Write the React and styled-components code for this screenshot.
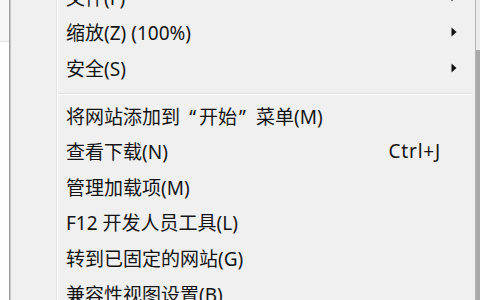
import React from "react";
import styled, { createGlobalStyle } from "styled-components";

const GlobalStyle = createGlobalStyle`
  html, body {
    margin: 0;
    padding: 0;
    background: #ffffff;
  }
  body {
    font-family: "Noto Sans", "Noto Sans CJK SC", sans-serif;
  }
`;

const Screen = styled.div`
  display: flex;
  width: 480px;
  height: 300px;
  overflow: hidden;
`;

// strip of the window behind the menu, on the left
const Backdrop = styled.div`
  width: 9px;
  flex: none;
  background: linear-gradient(
    to bottom,
    #f5f5f5 0,
    #f5f5f5 41px,
    #e4e4e4 41px,
    #e4e4e4 42px,
    #ffffff 42px
  );
`;

const Menu = styled.div`
  flex: 1;
  display: flex;
  background: #f0f0f0;
  border-left: 1px solid #a0a0a0;
  box-shadow: inset 1px 0 0 #c4c4c4;
`;

const Gutter = styled.div`
  width: 46px;
  flex: none;
  border-right: 1px solid #e2e3e3;
  box-shadow: 1px 0 0 #ffffff;
`;

const Items = styled.div`
  flex: 1;
  display: flex;
  flex-direction: column;
  margin-top: -21px;
  padding-left: 1px;
`;

const Item = styled.div`
  display: flex;
  align-items: center;
  height: 35.6px;
  flex: none;
  padding-left: 8px;
  font-size: 19px;
  color: #141414;
  white-space: nowrap;
`;

const Label = styled.span`
  flex: 1;
`;

// full-width CJK quotation mark
const Quote = styled.span`
  display: inline-block;
  width: 1em;
  text-align: ${(p) => (p.$open ? "right" : "left")};
  padding: ${(p) => (p.$open ? "0 3px 0 0" : "0 0 0 2px")};
  box-sizing: border-box;
`;

const Shortcut = styled.span`
  font-size: 19px;
  letter-spacing: 0.8px;
`;

const ArrowCell = styled.span`
  width: 34px;
  flex: none;
  display: flex;
  align-items: center;
  padding-left: 10px;
  box-sizing: border-box;
`;

const Separator = styled.div`
  flex: none;
  height: 12px;
  padding-top: 7px;
  padding-right: 3px;
  box-sizing: border-box;

  &::after {
    content: "";
    display: block;
    height: 1px;
    background: #e0e0e0;
    border-bottom: 1px solid #ffffff;
  }
`;

const RightEdge = styled.div`
  width: 5px;
  flex: none;
  border-left: 1px solid #b4b4b4;
  box-sizing: border-box;
  background: linear-gradient(
    to bottom,
    #ececec 0,
    #ececec 50px,
    #a9a9a9 50px
  );
`;

function SubArrow() {
  return (
    <svg width="6" height="10" viewBox="0 0 6 10">
      <path d="M0.5 0.5 L5.5 5 L0.5 9.5 Z" fill="#111" />
    </svg>
  );
}

function renderLabel(text) {
  return text.split(/([“”])/).map((part, i) => {
    if (part === "“") return <Quote key={i} $open>“</Quote>;
    if (part === "”") return <Quote key={i}>”</Quote>;
    return part;
  });
}

const groups = [
  [
    { label: "文件(F)", sub: true },
    { label: "缩放(Z) (100%)", sub: true },
    { label: "安全(S)", sub: true },
  ],
  [
    { label: "将网站添加到“开始”菜单(M)" },
    { label: "查看下载(N)", shortcut: "Ctrl+J" },
    { label: "管理加载项(M)" },
    { label: "F12 开发人员工具(L)" },
    { label: "转到已固定的网站(G)" },
    { label: "兼容性视图设置(B)" },
  ],
];

export default function App() {
  return (
    <>
      <GlobalStyle />
      <Screen>
        <Backdrop />
        <Menu>
          <Gutter />
          <Items>
            {groups.map((group, gi) => (
              <React.Fragment key={gi}>
                {gi > 0 && <Separator />}
                {group.map((item) => (
                  <Item key={item.label}>
                    <Label>{renderLabel(item.label)}</Label>
                    {item.shortcut && <Shortcut>{item.shortcut}</Shortcut>}
                    <ArrowCell>{item.sub && <SubArrow />}</ArrowCell>
                  </Item>
                ))}
              </React.Fragment>
            ))}
          </Items>
        </Menu>
        <RightEdge />
      </Screen>
    </>
  );
}
